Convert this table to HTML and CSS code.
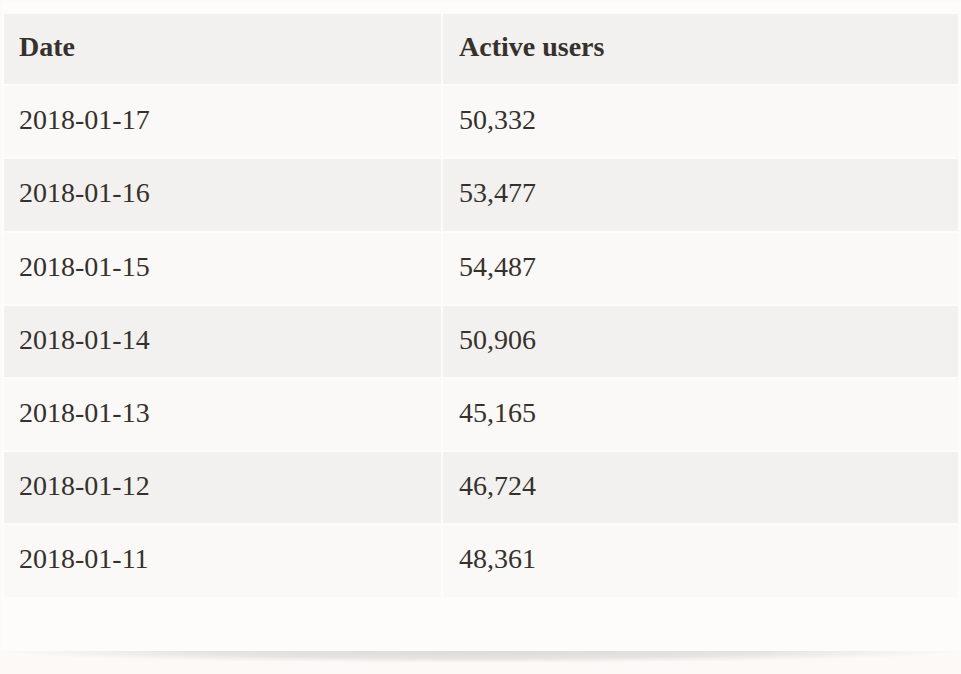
FILE: index.html
```html
<!DOCTYPE html>
<html lang="en">
<head>
<meta charset="utf-8">
<title>Active users</title>
<link rel="stylesheet" href="styles.css">
</head>
<body>
<div class="card">
  <table class="data">
    <thead>
      <tr><th>Date</th><th>Active users</th></tr>
    </thead>
    <tbody>
      <tr><td>2018-01-17</td><td>50,332</td></tr>
      <tr><td>2018-01-16</td><td>53,477</td></tr>
      <tr><td>2018-01-15</td><td>54,487</td></tr>
      <tr><td>2018-01-14</td><td>50,906</td></tr>
      <tr><td>2018-01-13</td><td>45,165</td></tr>
      <tr><td>2018-01-12</td><td>46,724</td></tr>
      <tr><td>2018-01-11</td><td>48,361</td></tr>
    </tbody>
  </table>
</div>
<div class="lift"></div>
</body>
</html>
```

FILE: styles.css
```css
html {
  margin: 0;
  padding: 0;
  background: #fdf9f6;
}
body {
  margin: 0;
  padding: 1px 0 0 1px;
  font-family: "Liberation Serif", "Times New Roman", serif;
  color: #36312c;
}
.card {
  background: #fdfcfa;
  padding: 11px 1px 51px 1px;
  height: 588px;
}
.lift {
  height: 12px;
  margin: 0 0;
  background: radial-gradient(50% 100% at 50% 0, #dcdad8 0%, #e6e4e2 60%, #fdf9f6 100%);
}
.data {
  width: 100%;
  border-collapse: separate;
  border-spacing: 2px;
  font-size: 28px;
  line-height: 1.4;
}
.data th,
.data td {
  text-align: left;
  padding: 14px 15px 18px;
  height: 39px;
}
.data th {
  font-weight: bold;
  background: #f2f1f0;
  padding-top: 13px;
  padding-bottom: 18px;
}
.data th:first-child,
.data td:first-child {
  width: 407px;
}
.data th:last-child,
.data td:last-child {
  padding-left: 16px;
}
.data tbody tr:nth-child(odd) td {
  background: #faf9f8;
}
.data tbody tr:nth-child(even) td {
  background: #f2f1f0;
}
```
